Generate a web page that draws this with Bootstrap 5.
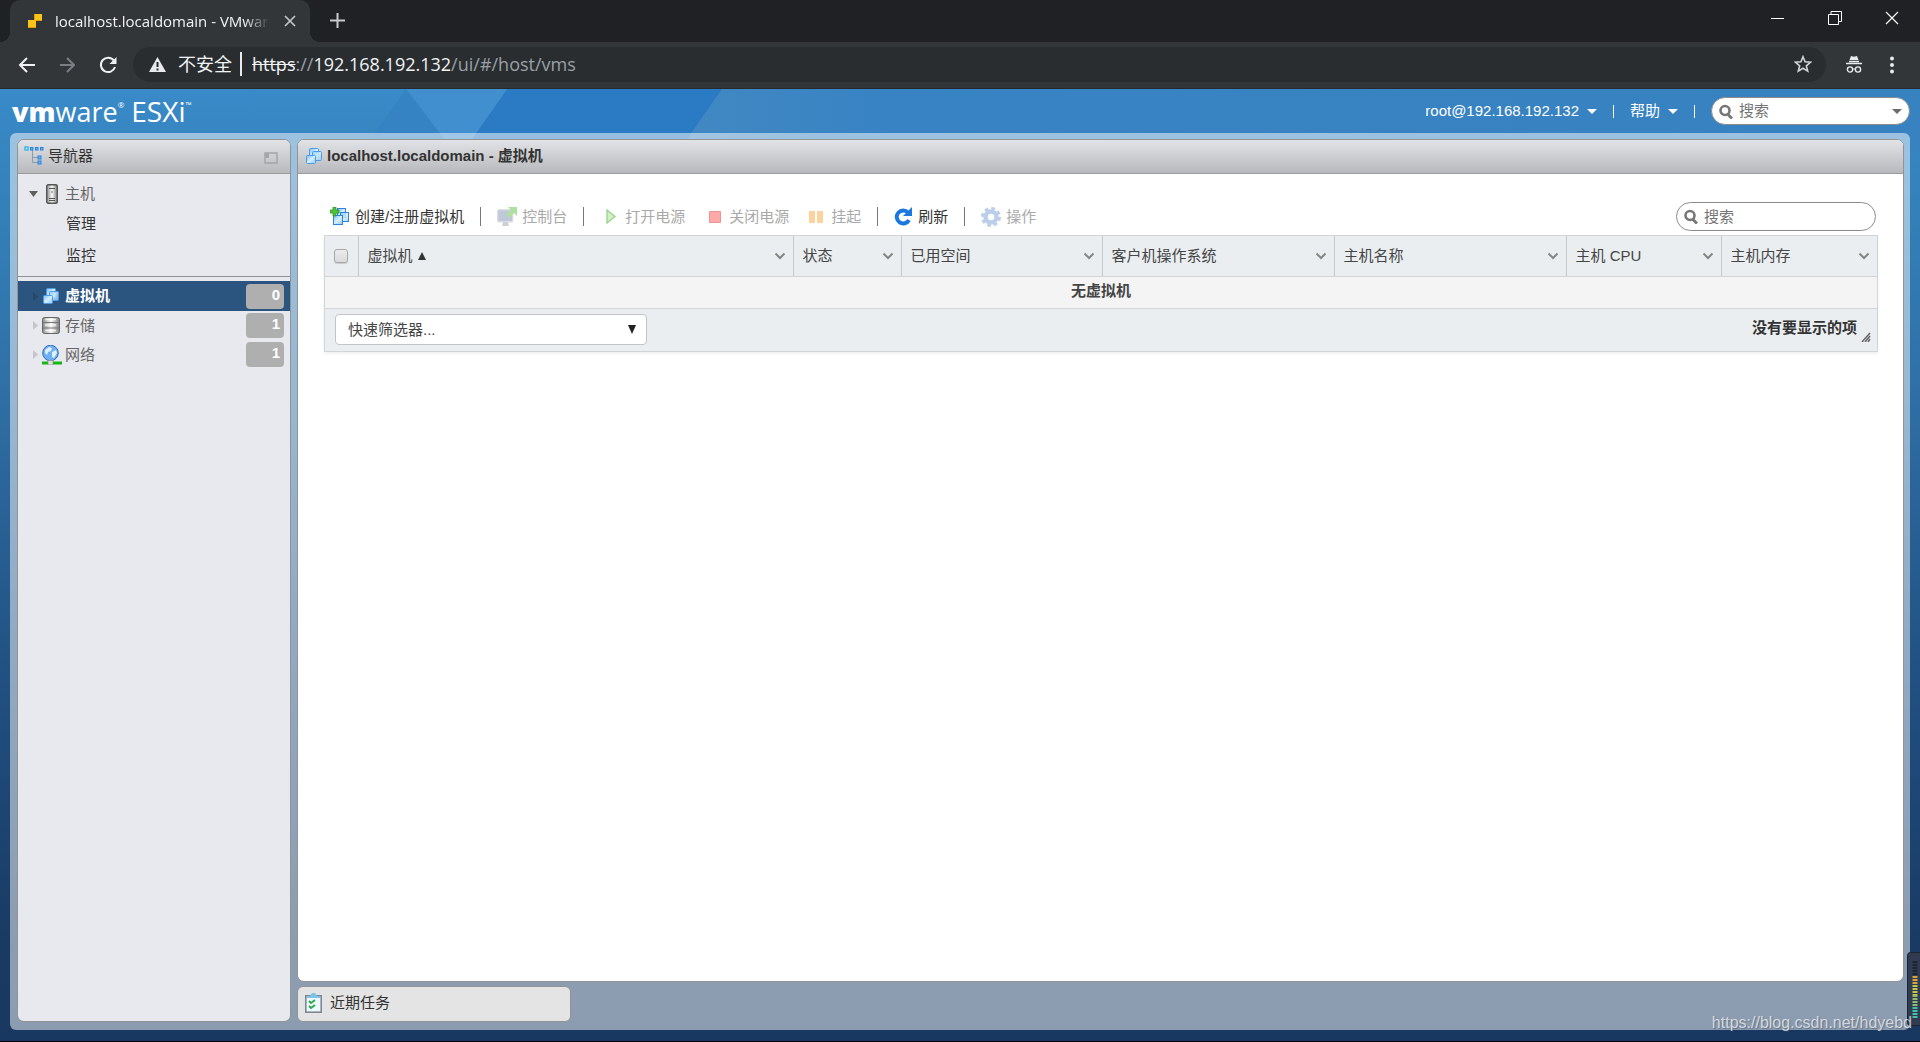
<!DOCTYPE html>
<html lang="zh-CN">
<head>
<meta charset="utf-8">
<meta name="viewport" content="width=device-width, initial-scale=1">
<title>localhost.localdomain - VMware ESXi</title>
<link href="https://cdn.jsdelivr.net/npm/bootstrap@5.3.0/dist/css/bootstrap.min.css" rel="stylesheet">
<style>
:root{--ui:"Liberation Sans","Noto Sans CJK SC",sans-serif;--chrome:"Open Sans","Noto Sans CJK SC",sans-serif;--edge:#939393}
body{font-family:var(--ui);font-size:15px;line-height:20px;color:#333;background:#000;overflow:hidden}
svg{display:block;flex:none}
button{font:inherit;color:inherit;background:none;border:0;padding:0}
a{color:inherit;text-decoration:none}
/* browser chrome */
.tabstrip{height:42px;background:#202124;padding-left:10px}
.tab-item{position:relative;width:300px;height:42px;background:#323639;border-radius:10px 10px 0 0;padding:0 14px 0 17px;font-family:var(--chrome);color:#f1f3f4}
.tab-item::before,.tab-item::after{content:"";position:absolute;bottom:0;width:10px;height:10px}
.tab-item::before{left:-10px;background:radial-gradient(circle at 0 0,transparent 10px,#323639 10px)}
.tab-item::after{right:-10px;background:radial-gradient(circle at 100% 0,transparent 10px,#323639 10px)}
.tab-title{width:219px;overflow:hidden;white-space:nowrap;-webkit-mask-image:linear-gradient(90deg,#000 88%,transparent);mask-image:linear-gradient(90deg,#000 88%,transparent)}
.win-btn{width:57px;height:36px;display:flex;align-items:center;justify-content:center}
.toolbar{height:47px;background:#323639;border-bottom:1px solid #27292b;padding:5px 22px 6px 18px}
.omni{height:35px;border-radius:18px;background:#292d30;font-family:var(--chrome);font-size:18px;line-height:24px;color:#f1f3f4;padding:0 14px 1px 16px}
.omni .dim{color:#9aa0a6}
.omni .bar{width:2px;height:24px;background:#e8eaed;margin:0 6px 0 8px}
/* page shell */
.shell{position:relative;background:linear-gradient(#3a8ac9,#3584be 8%,#2f6fa5 32%,#215082 62%,#193a63 90%,#183861);margin-bottom:1px;padding:0 10px 11px}
.banner-art{position:absolute;top:0;left:0}
.masthead{position:relative;height:44px;color:#fff;padding-left:2px}
.logo{font-family:"Open Sans",sans-serif;font-size:27px;line-height:36px;color:#fff}
.logo sup{font-size:8px;top:-14px}
.logo b{font-weight:800}
.logo .prod{font-size:28px;font-weight:500}
.vbar{width:1px;height:13px;background:#fff}
.caret{width:0;height:0;border:5px solid transparent;border-top-color:currentColor;border-bottom:0}
.find{border:1px solid #8c8c8c;border-radius:15px;background:#fff;padding:0 7px;gap:6px;color:#6d6d6d}
.find input{border:0;outline:0;background:none;width:100%;min-width:0;padding:0;color:#333}
.find input::placeholder{color:#757575;opacity:1}
.find-top{width:199px;height:28px}
.find-grid{width:200px;height:29px}
.frame{position:relative;background:rgba(255,255,255,.5);border-radius:6px;padding:6px 6px 8px 7px;gap:6px}
.pane{border:1px solid var(--edge);border-radius:7px;overflow:hidden;background:#fff}
.pane-head{height:34px;background:linear-gradient(#e2e3e6,#b8b9bd);border-bottom:1px solid #9c9c9c;padding:0 12px 2px 6px;font-weight:400}
.side{width:274px;flex:none;background:#e8e9ee}
.work{min-width:0}
.main-head{padding-left:7px}
.tree-row{height:29px;padding:0 6px 0 11px;color:#666}
.tree-row .twist{width:14px}
.tree-row .pic{width:20px;margin-right:3px;margin-left:-1px}
.tree-sub{display:block;height:32px;line-height:32px;padding-left:48px;color:#333}
.tree-first{height:40px}
.tree-kids .tree-sub:first-child{height:26px;line-height:20px}
.tree-kids{padding-bottom:4px}
.tree-cut{border-top:1px solid #8f9096;margin:0 0 4px}
.tree-on{height:30px;background:#2b547e;color:#fff;font-weight:700}
.count{width:38px;height:25px;border-radius:4px;background:#afafaf;color:#fff;font-weight:700;text-align:right;padding:1px 4px}
.body-pad{padding:28px 25px 28px 26px}
.acts{height:29px;margin-bottom:4px;padding:0 2px 0 6px}
.act{display:flex;align-items:center;gap:5px}
.act:disabled{color:#a9a9a9}
.act:disabled svg{opacity:.5}
.play{margin-left:6px}
.div-bar{width:1px;height:19px;background:#777}
.grid-box{border:1px solid #d2d4d6;box-shadow:0 2px 3px rgba(0,0,0,.06)}
.grid-box table{table-layout:fixed;width:100%;margin:0}
.grid-box th{height:40px;padding:0 7px 0 9px;background:#eaeef1;border-right:1px solid #c6c9cc;border-bottom:1px solid #d2d4d6;font-weight:400;color:#454545}
.grid-box th:last-child{border-right:0}
.grid-box td{height:32px;padding:0 0 2px;background:#f4f4f4;border-bottom:1px solid #d2d4d6;text-align:center;font-weight:700;color:#444}
.grid-foot{height:42px;background:#eaeef1;padding:0 6px 0 10px}
.quick{position:relative;width:312px}
.quick select{appearance:none;width:100%;height:31px;border:1px solid #c4c4c4;border-radius:4px;background:#fff;color:#444;padding:0 12px}
.quick svg{position:absolute;right:11px;top:11px;pointer-events:none}
.pick{appearance:none;display:block;width:14px;height:14px;border:1px solid #a8a8a8;border-radius:3px;background:linear-gradient(#ececec,#dadada);box-shadow:0 1px 1px rgba(0,0,0,.15)}
.tasks{width:274px;height:36px;border:1px solid var(--edge);border-radius:6px;background:#e4e4e4;padding:0 7px 2px}
.meter{position:absolute;right:0;bottom:15px}
.stamp{position:absolute;right:8px;bottom:8px;font-size:16px;line-height:20px;color:rgba(255,255,255,.68);text-shadow:1px 1px 1px rgba(60,70,90,.5)}
</style>
<script src="https://cdn.jsdelivr.net/npm/bootstrap@5.3.0/dist/js/bootstrap.bundle.min.js"></script>
</head>
<body class="d-flex flex-column vh-100">
<svg width="0" height="0" class="position-absolute" aria-hidden="true">
 <defs>
  <linearGradient id="metal" x1="0" x2="1"><stop offset="0" stop-color="#8a8a8a"/><stop offset=".5" stop-color="#fafafa"/><stop offset="1" stop-color="#7c7c7c"/></linearGradient>
  <linearGradient id="sky" x1="0" y1="0" x2="1" y2="1"><stop offset="0" stop-color="#7dbcf5"/><stop offset=".5" stop-color="#d4efff"/><stop offset="1" stop-color="#8cc9f8"/></linearGradient>
  <symbol id="vm" viewBox="0 0 18 18"><g stroke="#4a9ce8" fill="url(#sky)"><rect x="4.500" y="1.500" width="9" height="9" rx="1"/><rect x="7.500" y="4.500" width="9" height="9" rx="1" fill-opacity=".8"/><rect x="1.500" y="8.500" width="9" height="8" rx="1"/></g></symbol>
  <symbol id="lens" viewBox="0 0 14 15"><circle cx="6" cy="6.500" r="4.500" fill="none" stroke="#777" stroke-width="2.600"/><path d="M9 10.500l4 4" stroke="#777" stroke-width="3"/></symbol>
  <symbol id="chev" viewBox="0 0 12 8"><path d="M1.500 1.500L6 6l4.500-4.500" fill="none" stroke="#858585" stroke-width="2"/></symbol>
 </defs>
</svg>

<div class="tabstrip d-flex align-items-start">
 <div class="tab-item d-flex align-items-center">
  <svg width="16" height="16" viewBox="0 0 16 16"><path d="M7 1h8v7H9v7H1V7h6z" fill="#fcc419"/><path d="M1 14h8v1H1zM9 7h6v1H9zM7 1h1v6H7z" fill="#e09a00"/></svg>
  <span class="tab-title ms-2 ps-1">localhost.localdomain - VMware ESXi</span>
  <button class="ms-auto" aria-label="关闭标签页"><svg width="12" height="12" viewBox="0 0 12 12"><path d="M1 1l10 10M11 1L1 11" stroke="#c4c7ca" stroke-width="1.700"/></svg></button>
 </div>
 <button class="ms-3 mt-2 pt-1 ps-1" aria-label="新标签页"><svg width="15" height="17" viewBox="1 0 15 17"><path d="M8.500 1v15M1 8.500h15" stroke="#c8cacd" stroke-width="2"/></svg></button>
 <div class="ms-auto d-flex">
  <button class="win-btn" aria-label="最小化"><svg width="13" height="13"><path d="M0 6.500h13" stroke="#fff"/></svg></button>
  <button class="win-btn" aria-label="还原"><svg width="14" height="14"><path d="M.5 3.500h10v10H.5zM3 3V.5h10.500v10H11" fill="none" stroke="#fff"/></svg></button>
  <button class="win-btn" aria-label="关闭"><svg width="14" height="14"><path d="M1 1l12 12M13 1L1 13" stroke="#fff" stroke-width="1.200"/></svg></button>
 </div>
</div>
<div class="toolbar d-flex align-items-center">
 <button aria-label="后退" class="me-4"><svg width="18" height="18" viewBox="1 0 18 18"><path d="M18 9H4M10 2L3 9l7 7" fill="none" stroke="#eef0f2" stroke-width="2"/></svg></button>
 <button aria-label="前进" class="me-4" disabled><svg width="15" height="18" viewBox="0 0 15 18"><path d="M0 9h13M7 2l7 7-7 7" fill="none" stroke="#7b7f83" stroke-width="2"/></svg></button>
 <button aria-label="重新加载"><svg width="18" height="18" viewBox="0 0 18 18"><path d="M15 4.700A7.200 7.200 0 1 0 16 11" fill="none" stroke="#eef0f2" stroke-width="2"/><path d="M17.500 1v7h-7z" fill="#eef0f2"/></svg></button>
 <div class="omni d-flex align-items-center flex-grow-1 ms-3 me-3">
  <svg width="17" height="15" viewBox="0 0 17 15"><path d="M8.500 0L17 15H0z" fill="#e8eaed"/><path d="M8.500 5v5M8.500 11.500v2" stroke="#292d30" stroke-width="2"/></svg>
  <span class="ms-2 ps-1">不安全</span><span class="bar"></span>
  <span class="ps-1"><s>https</s><span class="dim">://</span>192.168.192.132<span class="dim">/ui/#/host/vms</span></span>
  <button class="ms-auto" aria-label="收藏"><svg width="18" height="18" viewBox="0 0 20 20"><path d="M10 2l2.300 5.600 6 .5-4.600 3.900 1.500 5.900L10 14.700l-5.200 3.200L6.300 12 1.700 8.100l6-.5z" fill="none" stroke="#d0d3d6" stroke-width="1.800"/></svg></button>
 </div>
 <svg class="ms-1 me-4" width="16" height="17" viewBox="0 0 16 17"><path d="M5 0l3 .8 3-.8 1.500 4h-9z" fill="#e8eaed"/><path d="M3 5.500h10M0 7.500h16" stroke="#e8eaed" stroke-width="1.400"/><circle cx="4" cy="13.500" r="2.600" fill="none" stroke="#e8eaed" stroke-width="1.400"/><circle cx="12" cy="13.500" r="2.600" fill="none" stroke="#e8eaed" stroke-width="1.400"/><path d="M6.500 13h3" stroke="#e8eaed"/></svg>
 <button aria-label="菜单" class="ms-1 me-1"><svg width="4" height="18" viewBox="0 0 4 18"><g fill="#e8eaed"><circle cx="2" cy="2.500" r="2"/><circle cx="2" cy="9" r="2"/><circle cx="2" cy="15.500" r="2"/></g></svg></button>
</div>

<div class="shell d-flex flex-column flex-grow-1">
 <svg class="banner-art" width="100%" height="63" aria-hidden="true">
  <defs><linearGradient id="fade" x1="0" x2="1"><stop offset="0" stop-color="#4289c3"/><stop offset=".1" stop-color="#3883c3"/><stop offset="1" stop-color="#3781be"/></linearGradient></defs>
  <rect x="678" width="100%" height="63" fill="url(#fade)"/>
  <path d="M507 0h215l-44 63H463z" fill="#2b7bc4"/><path d="M406 0h101l-44 63h-9z" fill="#418fcf"/><path d="M406 0l48 63h-92z" fill="#3583c3"/>
 </svg>
 <header class="masthead d-flex align-items-center">
  <a href="#" class="logo me-auto text-nowrap"><b>vm</b>ware<sup>®</sup> <span class="prod">ESXi</span><sup>™</sup></a>
  <button class="d-flex align-items-center gap-2">root@192.168.192.132 <span class="caret"></span></button>
  <span class="vbar ms-3 me-3"></span>
  <button class="d-flex align-items-center gap-2">帮助 <span class="caret"></span></button>
  <span class="vbar mx-3"></span>
  <label class="find find-top d-flex align-items-center"><svg width="14" height="15"><use href="#lens"/></svg><span class="visually-hidden">搜索</span><input type="search" placeholder="搜索"><span class="caret"></span></label>
 </header>
 <div class="frame d-flex flex-grow-1">
  <nav class="pane side d-flex flex-column" aria-label="导航器">
   <div class="pane-head d-flex align-items-center">
    <svg width="20" height="19" viewBox="0 0 20 19"><path d="M8.500 4v12.500H14M8.500 11.500H14" fill="none" stroke="#8d9bb0"/><rect x="1" y="1" width="3" height="3" fill="#d8f3ff" stroke="#35b3e8" stroke-width="1.400"/><g fill="#6cb2f5" stroke="#2b83dc"><rect x="6.500" y="1.500" width="2.500" height="2.500"/><rect x="11.500" y="1.500" width="2.500" height="2.500"/><rect x="16.500" y="1.500" width="2.500" height="2.500"/><rect x="14" y="10" width="3" height="3"/><rect x="14" y="15" width="3" height="3"/></g></svg>
    <span class="ms-1">导航器</span>
    <button class="ms-auto pt-1" aria-label="折叠"><svg width="14" height="12"><path d="M1 1h12v10H1z" fill="none" stroke="#a4a5a9" stroke-width="1.500"/><path d="M1 1h4v5H1z" fill="#a4a5a9"/></svg></button>
   </div>
   <a href="#" class="tree-row tree-first d-flex align-items-center"><span class="twist"><svg width="9" height="6"><path d="M0 0h9L4.500 6z" fill="#5f5f5f"/></svg></span>
    <span class="pic ps-1"><svg width="12" height="20" viewBox="0 0 12 20"><rect x=".7" y=".7" width="10.600" height="18.600" rx="1.500" fill="url(#metal)" stroke="#555" stroke-width="1.400"/><path d="M3 4.500h6M3 14.500h6M3 16.500h6" stroke="#555"/><path d="M6 7v2" stroke="#777"/></svg></span>主机</a>
   <div class="tree-kids">
    <a href="#" class="tree-sub">管理</a>
    <a href="#" class="tree-sub">监控</a>
   </div>
   <div class="tree-cut"></div>
   <a href="#" class="tree-row tree-on d-flex align-items-center"><span class="twist"><svg class="ms-1" width="5" height="9"><path d="M0 0l5 4.500L0 9z" fill="#26486b"/></svg></span><span class="pic"><svg width="18" height="18"><use href="#vm"/></svg></span>虚拟机<span class="count ms-auto">0</span></a>
   <a href="#" class="tree-row d-flex align-items-center"><span class="twist"><svg class="ms-1" width="5" height="9"><path d="M0 0l5 4.500L0 9z" fill="#c6c7cb"/></svg></span><span class="pic"><svg width="18" height="17" viewBox="0 0 18 17"><g fill="url(#metal)" stroke="#666"><rect x=".5" y=".5" width="17" height="16" rx="2"/></g><path d="M1 5.500h16M1 11h16" stroke="#777"/><path d="M3 2.500h11M3 8h11M3 13.500h11" stroke="#fff" stroke-width="1.500" opacity=".7"/></svg></span>存储<span class="count ms-auto">1</span></a>
   <a href="#" class="tree-row d-flex align-items-center"><span class="twist"><svg class="ms-1" width="5" height="9"><path d="M0 0l5 4.500L0 9z" fill="#c6c7cb"/></svg></span><span class="pic"><svg width="20" height="20" viewBox="0 0 20 20"><circle cx="8.500" cy="8" r="7.800" fill="#6fb0f3" stroke="#2d6fc4"/><path d="M3 5l4-3 3 1-1 3-3 1-1 3-2-2zM10 7l4-2 1 3-3 5-2-1z" fill="#dff0ff"/><path d="M0 16.500h20v3H0z" fill="#12b812"/><path d="M6 15.500h5V20H6z" fill="#ddd" stroke="#888" stroke-width=".6"/></svg></span>网络<span class="count ms-auto">1</span></a>
  </nav>
  <div class="work d-flex flex-column flex-grow-1">
   <main class="pane flex-grow-1">
    <div class="pane-head main-head d-flex align-items-center fw-bold"><svg class="me-1" width="18" height="18"><use href="#vm"/></svg><span>localhost.localdomain - 虚拟机</span></div>
    <div class="body-pad">
     <div class="acts d-flex align-items-center">
      <button class="act"><svg width="20" height="19" viewBox="0 0 20 19"><g stroke="#2f83d8" fill="url(#sky)"><rect x="7.500" y="1.500" width="8" height="9"/><rect x="10.500" y="5.500" width="8" height="9" fill-opacity=".8"/><rect x="3.500" y="8.500" width="9" height="9"/></g><path d="M3 0h3v3h3v3H6v3H3V6H0V3h3z" fill="#4fc43c" stroke="#26891b" stroke-width=".7"/></svg>创建/注册虚拟机</button>
      <span class="div-bar mx-3"></span>
      <button class="act" disabled><svg width="20" height="20" viewBox="0 0 20 20"><rect x=".7" y="2.700" width="15" height="12" rx="1" fill="#7f93b5" stroke="#b9bdc4" stroke-width="1.400"/><path d="M6 15h5l1 4H5z" fill="#9aa3b0"/><path d="M11 0h9v9l-3-3-5 5-3-3 5-5z" fill="#5fc244"/></svg>控制台</button>
      <span class="div-bar mx-3"></span>
      <button class="act play" disabled><svg class="me-1" width="10" height="15"><path d="M1 1l8 6.500L1 14z" fill="#a6e38c" stroke="#2faa18" stroke-width="1.300"/></svg>打开电源</button>
      <button class="act gap-2 ms-4" disabled><svg width="12" height="12"><path d="M.5.500h11v11H.5z" fill="#f55" stroke="#dd2a2a"/></svg>关闭电源</button>
      <button class="act gap-2 ms-3 ps-1" disabled><svg width="14" height="12"><path d="M0 0h6v12H0zM8 0h6v12H8z" fill="#fba83f"/></svg>挂起</button>
      <span class="div-bar mx-3"></span>
      <button class="act"><svg width="19" height="19" viewBox="0 0 19 19"><path d="M14 5.500A6.500 6.500 0 1 0 15 13" fill="none" stroke="#1b78de" stroke-width="4"/><path d="M18 0v9H9z" fill="#1b78de"/></svg>刷新</button>
      <span class="div-bar mx-3"></span>
      <button class="act" disabled><svg width="20" height="20" viewBox="0 0 20 20"><circle cx="10" cy="10" r="8.500" fill="none" stroke="#7b9fd4" stroke-width="3" stroke-dasharray="3.700 2.976"/><circle cx="10" cy="10" r="5.500" fill="none" stroke="#7b9fd4" stroke-width="4.500"/></svg>操作</button>
      <label class="find find-grid d-flex align-items-center ms-auto"><svg width="14" height="15"><use href="#lens"/></svg><span class="visually-hidden">搜索</span><input type="search" placeholder="搜索"></label>
     </div>
     <div class="grid-box">
      <table>
       <colgroup><col style="width:33px"><col><col style="width:108px"><col style="width:201px"><col style="width:232px"><col style="width:232px"><col style="width:155px"><col style="width:156px"></colgroup>
       <thead><tr>
        <th scope="col"><input type="checkbox" class="pick" aria-label="全选"></th>
        <th scope="col"><div class="d-flex align-items-center">虚拟机<svg class="ms-1 me-auto" width="10" height="8"><path d="M1 8h8L5 0z" fill="#333"/></svg><svg width="12" height="8"><use href="#chev"/></svg></div></th>
        <th scope="col"><div class="d-flex align-items-center justify-content-between">状态<svg width="12" height="8"><use href="#chev"/></svg></div></th>
        <th scope="col"><div class="d-flex align-items-center justify-content-between">已用空间<svg width="12" height="8"><use href="#chev"/></svg></div></th>
        <th scope="col"><div class="d-flex align-items-center justify-content-between">客户机操作系统<svg width="12" height="8"><use href="#chev"/></svg></div></th>
        <th scope="col"><div class="d-flex align-items-center justify-content-between">主机名称<svg width="12" height="8"><use href="#chev"/></svg></div></th>
        <th scope="col"><div class="d-flex align-items-center justify-content-between">主机 CPU<svg width="12" height="8"><use href="#chev"/></svg></div></th>
        <th scope="col"><div class="d-flex align-items-center justify-content-between">主机内存<svg width="12" height="8"><use href="#chev"/></svg></div></th>
       </tr></thead>
       <tbody><tr><td colspan="8">无虚拟机</td></tr></tbody>
      </table>
      <div class="grid-foot d-flex align-items-center justify-content-between">
       <div class="quick"><label class="visually-hidden" for="quick">快速筛选器</label><select id="quick"><option>快速筛选器...</option></select><svg width="8" height="9"><path d="M0 0h8L4 9z" fill="#222"/></svg></div>
       <div class="d-flex align-items-end gap-1"><strong class="pb-1">没有要显示的项</strong><svg width="10" height="10"><path d="M1 10l8-9M4 10l5-6M7 10l2-3" stroke="#666" stroke-width="1.500"/></svg></div>
      </div>
     </div>
    </div>
   </main>
   <button class="tasks d-flex align-items-center mt-1"><svg class="me-2" width="17" height="20" viewBox="0 0 17 20"><rect x=".8" y="2.800" width="15.400" height="16.400" fill="#eef8ff" stroke="#7d8794" stroke-width="1.600"/><path d="M2 3h13v2H2zM5 3l2-3h3l2 3z" fill="#7cc3ea"/><path d="M4 8l2 2 4-3M4 13l2 2 4-3" fill="none" stroke="#2fa84a" stroke-width="2"/></svg>近期任务</button>
  </div>
 </div>
 <svg class="meter" width="13" height="74" viewBox="0 0 13 74" aria-hidden="true"><rect x=".5" y=".5" width="16" height="73" rx="3" fill="#303a50" stroke="#1b2231"/><g stroke-width="4" stroke-dasharray="2 1"><path d="M8 9v15" stroke="#1d2534" stroke-width="5"/><path d="M8 24v9" stroke="#d9a43c" stroke-width="5"/><path d="M8 33v10" stroke="#c3c644" stroke-width="5"/><path d="M8 43v12" stroke="#8fbd66" stroke-width="5"/><path d="M8 55v12" stroke="#3fc0a8" stroke-width="5"/></g></svg>
 <span class="stamp">https://blog.csdn.net/hdyebd</span>
</div>
</body>
</html>
